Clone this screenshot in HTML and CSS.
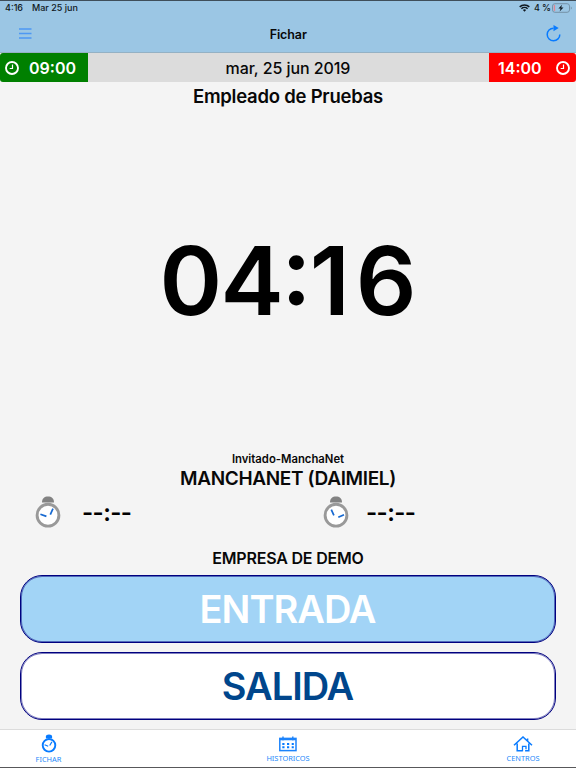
FILE: index.html
```html
<!DOCTYPE html>
<html lang="es">
<head>
<meta charset="utf-8">
<title>Fichar</title>
<link rel="stylesheet" href="styles.css">
</head>
<body>
<div class="app">
  <header class="header">
    <div class="status">
      <span class="status-time">4:16</span>
      <span class="status-date">Mar 25 jun</span>
      <svg class="wifi" viewBox="0 0 11 8"><g fill="none" stroke="#101820" stroke-width="1.5"><path d="M.7 2.9a6.8 6.8 0 0 1 9.6 0M2.4 4.8a4.4 4.4 0 0 1 6.2 0"/></g><path d="M3.9 6.1a2.3 2.3 0 0 1 3.2 0L5.5 7.8z" fill="#101820"/></svg>
      <span class="status-level">4 %</span>
      <svg class="battery" viewBox="0 0 20 10"><rect x=".5" y=".7" width="17" height="8.6" rx="2.4" fill="none" stroke="#7592a7"/><path d="M2 2.8q0-.7.7-.7v5.8q-.7 0-.7-.7z" fill="#e87f88" stroke="#e87f88" stroke-width=".5"/><path d="M18.8 3.5v3q1-.5 1-1.500t-1-1.500z" fill="#7592a7"/><path d="M10.100 1.800 6.400 5.500h2.200L7.600 8.400l3.900-3.800H9.200z" fill="#101820"/></svg>
    </div>
    <div class="navbar">
      <svg class="menu" viewBox="0 0 13 12"><path d="M0 1h12.500M0 5.500h12.500M0 10h12.500" stroke="#4d98f3" stroke-width="1.300"/></svg>
      <h1 class="title">Fichar</h1>
      <svg class="reload" viewBox="0 0 15 17"><path d="M7.500 3.200A6.300 6.300 0 1 0 13.800 9.400" fill="none" stroke="#087bff" stroke-width="1.500"/><path d="M7.500 0v6.200l5.200-3.100z" fill="#087bff"/></svg>
    </div>
  </header>
  <div class="daybar">
    <div class="shift shift-in">
      <svg class="clock-icon" viewBox="0 0 14 14"><circle cx="7" cy="7" r="6" fill="none" stroke="#fff" stroke-width="1.900"/><path d="M7.500 3.500v4H4.700" fill="none" stroke="#fff" stroke-width="1.200"/></svg>
      <span class="shift-time">09:00</span>
    </div>
    <div class="date"><span>mar, 25 jun 2019</span></div>
    <div class="shift shift-out">
      <span class="shift-time">14:00</span>
      <svg class="clock-icon" viewBox="0 0 14 14"><circle cx="7" cy="7" r="6" fill="none" stroke="#fff" stroke-width="1.900"/><path d="M7.500 3.500v4H4.700" fill="none" stroke="#fff" stroke-width="1.200"/></svg>
    </div>
  </div>
  <main class="main">
    <div class="employee"><span>Empleado de Pruebas</span></div>
    <div class="clock"><span class="hours">04</span><span class="colon">:</span><span class="minutes">16</span></div>
    <div class="guest"><span>Invitado-ManchaNet</span></div>
    <div class="center"><span>MANCHANET (DAIMIEL)</span></div>
    <div class="marks">
      <div class="mark">
        <svg class="stopwatch" viewBox="0 0 26 32"><path d="M7 6.500C7 2.400 9.500.5 13 .5s6 1.900 6 6z" fill="#828282"/><circle cx="13" cy="19.200" r="10.900" fill="#fff" stroke="#999" stroke-width="2.900"/><path d="M5.400 18.200l6 2.200M15.300 18.700l2.700-6" stroke="#1769d1" stroke-width="1.700"/></svg>
        <span class="mark-time">--:--</span>
      </div>
      <div class="mark mark-out">
        <svg class="stopwatch" viewBox="0 0 26 32"><path d="M7 6.500C7 2.400 9.500.5 13 .5s6 1.900 6 6z" fill="#828282"/><circle cx="13" cy="19.200" r="10.900" fill="#fff" stroke="#999" stroke-width="2.900"/><path d="M8.300 13.700l2.600 5.700M15.300 21.300l5.700-2.600" stroke="#1769d1" stroke-width="1.700"/></svg>
        <span class="mark-time">--:--</span>
      </div>
    </div>
    <div class="company"><span>EMPRESA DE DEMO</span></div>
    <button class="action action-in"><span>ENTRADA</span></button>
    <button class="action action-out"><span>SALIDA</span></button>
  </main>
  <nav class="tabs">
    <a class="tab tab-fichar">
      <svg width="16" height="19" viewBox="0 0 16 19"><path d="M4.900 4.200V2.500Q4.900.4 8 .4t3.100 2.100v1.700z" fill="#087bff"/><circle cx="8" cy="11.300" r="6.300" fill="none" stroke="#087bff" stroke-width="1.900"/><path d="M3.600 10.800l3.600 1.500M8.700 11.500l2.200-3.600" stroke="#087bff" stroke-width="1.200"/></svg>
      <span>FICHAR</span>
    </a>
    <a class="tab tab-historicos">
      <svg width="18" height="16" viewBox="0 0 18 16"><rect x=".8" y="2.400" width="16.200" height="12.200" fill="none" stroke="#1c83fb" stroke-width="1.500"/><path d="M1 3.600h16M4 .5v4M13.800.5v4" stroke="#1c83fb" stroke-width="1.400"/><path d="M3.300 7.900h11.500M3.300 11.300h11.500" stroke="#087bff" stroke-width="2" stroke-dasharray="2.200 2.500"/></svg>
      <span>HISTORICOS</span>
    </a>
    <a class="tab tab-centros">
      <svg width="20" height="16" viewBox="0 0 20 16"><path d="M1 9.200 10 1l9 8.200M4.200 7.500v7.200h5.300M15.800 7.500v7.200h-3.700M14.600 2.500v3" fill="none" stroke="#087bff" stroke-width="1.500"/><path d="M9.500 15.300v-5h3.500v3" fill="none" stroke="#087bff" stroke-width="1.300"/></svg>
      <span>CENTROS</span>
    </a>
  </nav>
</div>
</body>
</html>
```
FILE: styles.css
```css
* { box-sizing: border-box; }
body {
  margin: 0;
  font-family: Inter, "Liberation Sans", sans-serif;
  color: #080808;
  background: #f4f4f4;
}
svg { display: block; flex: none; }
span { white-space: nowrap; }
.app {
  width: 576px;
  height: 768px;
  display: flex;
  flex-direction: column;
  overflow: hidden;
  border-bottom: 1px solid #58585a;
}
.header {
  height: 53px;
  background: #9bc6e4;
  border-top: 1px solid #3f4e5a;
  border-bottom: 1px solid #94b1c4;
}
.status {
  display: flex;
  align-items: center;
  height: 14px;
  padding: 0 4px 0 5px;
  font-size: 9px;
  line-height: 14px;
  font-weight: 500;
  color: #101820;
}
.status-time { width: 27px; }
.wifi { width: 11px; height: 8px; margin-left: auto; margin-right: 4px; }
.status-level { width: 18px; letter-spacing: -.2px; }
.battery { width: 20px; height: 10px; }
.navbar {
  display: flex;
  align-items: center;
  justify-content: space-between;
  height: 38px;
  padding: 0 14.5px 0 19px;
}
.menu { width: 13px; height: 12px; }
.title { margin: 0; padding-right: 2px; font-size: 12.5px; font-weight: 600; letter-spacing: -.1px; }
.reload { width: 15px; height: 17px; margin-top: -2px; }
.daybar { display: flex; height: 29px; background: #f4f4f4; }
.shift {
  display: flex;
  align-items: center;
  color: #fff;
  font-size: 16px;
  font-weight: 600;
}
.clock-icon { width: 14px; height: 14px; }
.shift-in { width: 87.5px; padding-left: 5px; gap: 10px; background: #008000; border-radius: 3px 0 0 3px; }
.shift-out { width: 87.5px; padding-left: 9.5px; gap: 14px; background: #f00; border-radius: 0 3px 3px 0; }
.date {
  flex: 1;
  text-align: center;
  background: #dcdcdc;
  font-size: 16px;
  line-height: 30px;
  font-weight: 500;
  letter-spacing: -.07px;
}
.main { flex: 1; text-align: center; font-weight: 600; }
.employee { height: 30px; font-size: 18.500px; line-height: 29px; letter-spacing: -.24px; }
.clock {
  display: flex;
  justify-content: center;
  height: 340px;
  font-size: 95px;
  line-height: 338px;
  color: #000;
  font-feature-settings: "case";
}
.hours { letter-spacing: -1.5px; }
.colon { margin: 0 -2px 0 -1px; }
.minutes { letter-spacing: 6px; margin-right: -6px; }
.guest { height: 14px; font-size: 11.3px; line-height: 14px; }
.center { height: 24px; font-size: 19px; line-height: 25px; letter-spacing: -.35px; }
.marks { display: grid; grid-template-columns: 1fr 1fr; height: 54px; }
.mark { display: flex; padding-left: 35px; }
.stopwatch { width: 26px; height: 32px; margin-top: 6px; }
.mark-time { margin-left: 21px; font-size: 24px; line-height: 46px; letter-spacing: -.6px; color: #000; }
.mark-out .mark-time { margin-left: 17px; }
.company { height: 31px; font-size: 16px; line-height: 29px; letter-spacing: -.2px; }
.action {
  display: block;
  width: 536px;
  height: 68px;
  margin: 0 20px 9px;
  padding: 0;
  border: 1px solid #00007f;
  box-shadow: inset 0 0 0 1px rgba(0, 0, 127, .5);
  border-radius: 22px;
  font-family: inherit;
  font-size: 38px;
  line-height: 66px;
  font-weight: 600;
  letter-spacing: -1px;
}
.action span { margin-right: 1px; }
.action-in { background: #a2d4f6; color: #fff; }
.action-out { background: #fff; color: #00468c; }
.tabs {
  display: grid;
  grid-template-columns: 97px 1fr 97px;
  height: 38px;
  background: #fff;
  border-top: 1px solid #dcdcdc;
  font-family: "Noto Sans", "Open Sans", sans-serif;
  font-size: 7.4px;
  line-height: 9px;
  color: #2388fa;
}
.tab { display: flex; flex-direction: column; align-items: center; }
.tab span { margin-top: 2px; }
.tab-fichar { padding-top: 4px; }
.tab-historicos { padding-top: 6px; }
.tab-centros { padding-top: 6px; padding-right: 9px; }
```
